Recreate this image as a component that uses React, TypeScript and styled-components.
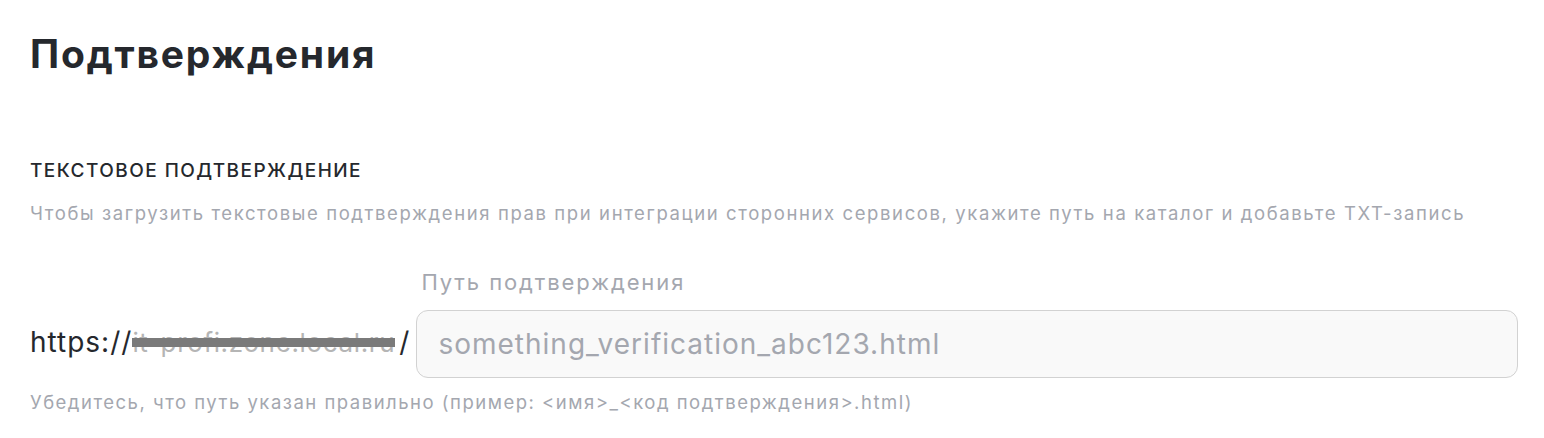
import React from "react";
import styled, { createGlobalStyle } from "styled-components";

const GlobalStyle = createGlobalStyle`
  html, body {
    margin: 0;
    padding: 0;
    background: #ffffff;
  }
  body {
    font-family: Inter, "Noto Sans", sans-serif;
    color: #25282d;
  }
`;

export default function App() {
  return (
    <>
      <GlobalStyle />
      <Page>
        <Title>Подтверждения</Title>
        <Section>
          <SectionTitle>Текстовое подтверждение</SectionTitle>
          <Description>
            Чтобы загрузить текстовые подтверждения прав при интеграции сторонних сервисов, укажите путь на каталог и
            добавьте TXT-запись
          </Description>
          <FieldRow>
            <UrlPrefix>
              https://<Redacted>it-profi.zone.local.ru</Redacted>/
            </UrlPrefix>
            <Field>
              <FieldLabel>Путь подтверждения</FieldLabel>
              <Input placeholder="something_verification_abc123.html" />
            </Field>
          </FieldRow>
          <Hint>Убедитесь, что путь указан правильно (пример: &lt;имя&gt;_&lt;код подтверждения&gt;.html)</Hint>
        </Section>
      </Page>
    </>
  );
}

const Page = styled.div`
  padding: 28px 26px 0 30px;
  width: 1544px;
  box-sizing: border-box;
`;

const Title = styled.h1`
  margin: 0;
  font-size: 39px;
  line-height: 52px;
  font-weight: 700;
  color: #25282d;
  letter-spacing: 1.8px;
`;

const Section = styled.div`
  display: flex;
  flex-direction: column;
  margin-top: 79px;
`;

const SectionTitle = styled.h2`
  margin: 0;
  font-size: 19px;
  line-height: 24px;
  font-weight: 500;
  letter-spacing: 1.45px;
  text-transform: uppercase;
  color: #25282d;
`;

const Description = styled.p`
  margin: 18px 0 0;
  font-size: 18.5px;
  line-height: 24px;
  letter-spacing: 1.6px;
  color: #a4a7af;
`;

const FieldRow = styled.div`
  display: flex;
  align-items: flex-end;
  gap: 6px;
  margin-top: 44px;
`;

const UrlPrefix = styled.div`
  font-size: 28px;
  line-height: 30px;
  letter-spacing: 1px;
  color: #25282d;
  padding-bottom: 20px;
  white-space: nowrap;
  display: flex;
  align-items: baseline;
`;

const Redacted = styled.span`
  position: relative;
  display: inline-block;
  margin-right: 4px;
  font-size: 26px;
  letter-spacing: 0.65px;
  color: #b5b5b5;
  &::after {
    content: "";
    position: absolute;
    left: 0;
    right: 0;
    top: 10px;
    height: 9px;
    background: #7a7a7a;
  }
`;

const Field = styled.label`
  display: flex;
  flex-direction: column;
  gap: 15px;
  flex: 1;
`;

const FieldLabel = styled.span`
  padding-left: 5px;
  font-size: 22px;
  line-height: 26px;
  letter-spacing: 1.9px;
  color: #a4a7af;
`;

const Input = styled.input`
  box-sizing: border-box;
  height: 68px;
  width: 100%;
  padding: 0 21px;
  border: 1px solid #d2d2d2;
  border-radius: 12px;
  background: #f9f9f9;
  font-family: Inter, "Noto Sans", sans-serif;
  font-size: 28px;
  letter-spacing: 1px;
  color: #25282d;
  outline: none;
  &::placeholder {
    color: #a4a7af;
  }
`;

const Hint = styled.p`
  margin: 12px 0 0;
  font-size: 18.5px;
  line-height: 24px;
  letter-spacing: 1.5px;
  color: #a4a7af;
`;
